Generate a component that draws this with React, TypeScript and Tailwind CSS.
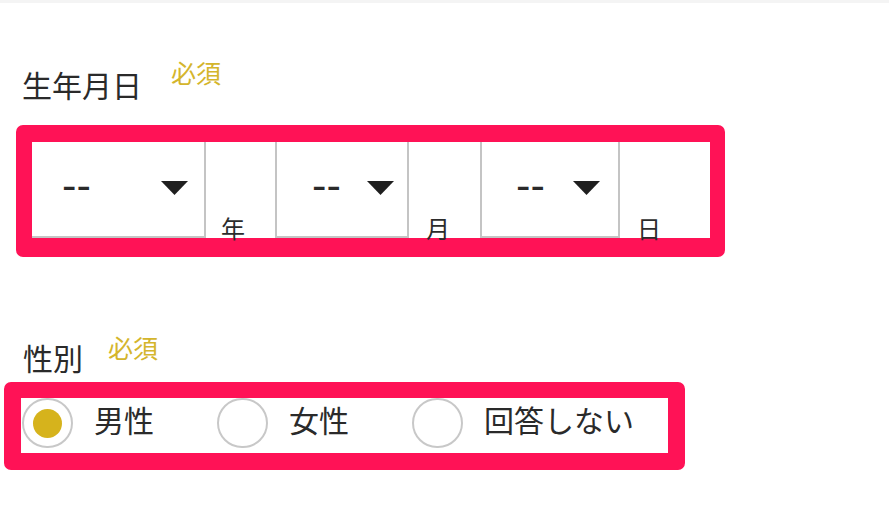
import React from "react";

const Tri = () => (
  <svg width="27" height="14" viewBox="0 0 27 14" className="shrink-0">
    <polygon points="0,0 27,0 13.5,14" fill="#1f1f1f" />
  </svg>
);

const Sel = ({ w, pl, gap, left }: { w: string; pl: string; gap: string; left: boolean }) => (
  <div
    className={`${w} ${left ? "border-l-2" : ""} border-r-2 border-b-2 border-[#c4c4c4] bg-white flex items-center ${pl} h-full`}
  >
    <span className="w-[30px] text-[40px] leading-none text-[#2a2a2a] font-['DejaVu_Sans',sans-serif] -mt-[6px]">--</span>
    <div className={`${gap} -mt-[2px]`}>
      <Tri />
    </div>
  </div>
);

const Unit = ({ w, pl, t }: { w: string; pl: string; t: string }) => (
  <div className={`${w} ${pl} h-full flex items-end bg-white`}>
    <span className="text-[24px] leading-none text-[#2c2c2c] -mb-[2px]">{t}</span>
  </div>
);

const Radio = ({ on, label }: { on: boolean; label: string }) => (
  <div className="flex items-start">
    <div className="w-[51px] h-[50px] rounded-full border-2 border-[#c8c8c8] bg-white flex items-center justify-center shrink-0">
      {on && <div className="w-[29px] h-[29px] rounded-full bg-[#d6b31c]" />}
    </div>
    <span className="ml-[21px] mt-[6px] text-[30px] leading-none text-[#2a2a2a]">{label}</span>
  </div>
);

export default function App() {
  return (
    <div className="w-[889px] h-[528px] bg-white border-t-[3px] border-[#f4f4f4] overflow-hidden font-['Noto_Sans_CJK_JP',sans-serif]">
      <div className="flex items-start pl-[22px] pt-[66px]">
        <span className="text-[30px] leading-none text-[#2a2a2a]">生年月日</span>
        <span className="ml-[29px] -mt-[9px] text-[25px] leading-none text-[#d4b52c]">必須</span>
      </div>
      <div className="ml-[16px] mt-[26px] w-[709px] h-[132px] border-l-[16px] border-t-[17px] border-r-[15px] border-b-[19px] border-[#ff1256] rounded-[7px] bg-white">
        <div className="flex h-full">
          <Sel w="w-[174px]" pl="pl-[30px]" gap="ml-[69px]" left={false} />
          <Unit w="w-[69px]" pl="pl-[15px]" t="年" />
          <Sel w="w-[134px]" pl="pl-[35px]" gap="ml-[25px]" left={true} />
          <Unit w="w-[71px]" pl="pl-[17px]" t="月" />
          <Sel w="w-[140px]" pl="pl-[34px]" gap="ml-[27px]" left={true} />
          <Unit w="w-[89px]" pl="pl-[17px]" t="日" />
        </div>
      </div>
      <div className="flex items-start pl-[23px] pt-[85px]">
        <span className="text-[30px] leading-none text-[#2a2a2a]">性別</span>
        <span className="ml-[25px] -mt-[7px] text-[25px] leading-none text-[#d4b52c]">必須</span>
      </div>
      <div className="ml-[4px] mt-[10px] w-[681px] h-[88px] border-l-[17px] border-t-[16px] border-r-[17px] border-b-[17px] border-[#ff1256] rounded-[7px] bg-white">
        <div className="flex items-start h-full pl-[1px] gap-[63px]">
          <Radio on={true} label="男性" />
          <Radio on={false} label="女性" />
          <Radio on={false} label="回答しない" />
        </div>
      </div>
    </div>
  );
}
